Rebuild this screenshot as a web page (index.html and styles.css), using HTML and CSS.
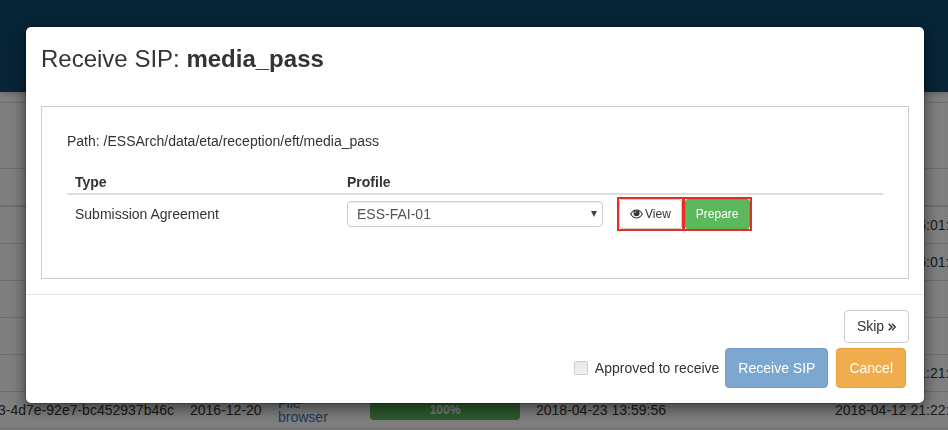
FILE: index.html
```html
<!DOCTYPE html>
<html lang="en">
<head>
<meta charset="utf-8">
<title>Receive SIP</title>
<link rel="stylesheet" href="styles.css">
</head>
<body>
<div class="page">
  <header class="navbar"></header>
  <table class="listing">
    <colgroup><col class="col-id"><col class="col-date"><col class="col-files"><col class="col-progress"><col class="col-start"><col></colgroup>
    <thead>
      <tr class="filters"><th colspan="6"></th></tr>
      <tr class="titles"><th></th><th></th><th></th><th></th><th></th><th></th></tr>
    </thead>
    <tbody>
      <tr><td></td><td></td><td></td><td></td><td></td><td>2018-04-12 16:01:15</td></tr>
      <tr><td></td><td></td><td></td><td></td><td></td><td>2018-04-12 16:01:15</td></tr>
      <tr><td></td><td></td><td></td><td></td><td></td><td></td></tr>
      <tr><td></td><td></td><td></td><td></td><td></td><td></td></tr>
      <tr><td></td><td></td><td></td><td></td><td></td><td>2018-04-12 21:21:42</td></tr>
      <tr><td><div class="uuid">3-4d7e-92e7-bc452937b46c</div></td><td>2016-12-20</td><td class="files"><a href="#files">File browser</a></td><td><div class="progress">100%</div></td><td>2018-04-23 13:59:56</td><td>2018-04-12 21:22:42</td></tr>
    </tbody>
  </table>
</div>
<div class="backdrop">
  <section class="modal" role="dialog" aria-labelledby="modal-title">
    <div class="modal-header">
      <h1 id="modal-title">Receive SIP: <strong>media_pass</strong></h1>
    </div>
    <div class="modal-body">
      <div class="details">
        <p class="path">Path: /ESSArch/data/eta/reception/eft/media_pass</p>
        <table class="profiles">
          <thead><tr><th>Type</th><th>Profile</th><th></th></tr></thead>
          <tbody>
            <tr>
              <td><label for="profile">Submission Agreement</label></td>
              <td><div class="select"><select id="profile"><option>ESS-FAI-01</option></select></div></td>
              <td>
                <div class="actions">
                  <span class="marked"><button type="button" class="btn btn-small btn-default"><svg class="eye" viewBox="0 0 14 12" aria-hidden="true"><path d="M.7 6Q3.3 1.700 7 1.700T13.3 6Q10.700 10.300 7 10.300T.7 6Z" fill="none" stroke="currentColor" stroke-width="1.200"/><circle cx="7" cy="5.200" r="3.200" fill="currentColor"/><path d="M5.200 5.200Q5.200 3.500 6.900 3.500" fill="none" stroke="#fff" stroke-width=".7"/></svg>View</button></span>
                  <span class="marked"><button type="button" class="btn btn-small btn-success">Prepare</button></span>
                </div>
              </td>
            </tr>
          </tbody>
        </table>
      </div>
    </div>
    <div class="modal-footer">
      <button type="button" class="btn btn-default">Skip <svg class="skip" viewBox="0 0 8 8" aria-hidden="true"><path d="M.7.7 4 4 .7 7.300M4 .7 7.300 4 4 7.300" fill="none" stroke="currentColor" stroke-width="1.400"/></svg></button>
      <div class="confirm">
        <label class="approve"><input type="checkbox">Approved to receive</label>
        <button type="button" class="btn btn-large btn-primary">Receive SIP</button>
        <button type="button" class="btn btn-large btn-warning">Cancel</button>
      </div>
    </div>
  </section>
</div>
</body>
</html>
```
FILE: styles.css
```css
* { box-sizing: border-box; }
body {
  margin: 0;
  overflow: hidden;
  background: #fff;
  color: #333;
  font: 14px/20px "Liberation Sans", Arial, sans-serif;
}
button, select, input { font: inherit; }

.page { height: 100vh; overflow: hidden; }
.navbar {
  height: 92px;
  margin-bottom: 10px;
  background: #104a70;
  box-shadow: 0 2px 6px rgba(0, 0, 0, .2);
}
.listing {
  width: 100%;
  min-width: 948px;
  table-layout: fixed;
  border-collapse: separate;
  border-spacing: 0;
  white-space: nowrap;
}
.col-id { width: 182px; }
.col-date { width: 88px; }
.col-files { width: 92px; }
.col-progress { width: 166px; }
.col-start { width: 299px; }
.listing th, .listing td {
  height: 37px;
  padding: 0 8px;
  border-top: 1px solid #ddd;
}
.listing .filters th { height: 66px; }
.listing .titles th { height: 38px; border-bottom: 1px solid #ddd; }
.listing tbody tr:last-child td { border-bottom: 1px solid #ddd; height: 38px; }
.uuid { display: flex; justify-content: flex-end; }
.listing .files { line-height: 14px; white-space: normal; }
.listing a { color: #337ab7; text-decoration: none; }
.progress {
  height: 20px;
  border-radius: 4px;
  background: #5cb85c;
  color: #fff;
  font-size: 12px;
  font-weight: bold;
  text-align: center;
}

.backdrop {
  position: fixed;
  inset: 0;
  padding: 26px 23px 0 25px;
  background: rgba(0, 0, 0, .5);
}
.modal {
  border: 1px solid rgba(0, 0, 0, .2);
  border-radius: 6px;
  background: #fff;
  background-clip: padding-box;
  box-shadow: 0 5px 15px rgba(0, 0, 0, .5);
}
.modal-header { padding: 15px 15px 0; }
h1 { margin: 0; font-size: 24px; line-height: 34px; font-weight: normal; }
.modal-body { padding: 30px 15px 15px; }
.details { min-height: 173px; padding: 24px 25px; border: 1px solid #ccc; }
.path { margin: 0 0 21px; }
.profiles { width: 100%; table-layout: fixed; border-collapse: separate; border-spacing: 0; }
.profiles th { padding: 0 8px 1px; border-bottom: 2px solid #ddd; text-align: left; }
.profiles td { height: 38px; padding: 0 8px; vertical-align: middle; }

.select { position: relative; }
.select::after {
  content: "";
  position: absolute;
  top: 10px;
  right: 6px;
  border: 3px solid transparent;
  border-top: 6px solid #444;
  border-bottom: 0;
  pointer-events: none;
}
select {
  display: block;
  width: 100%;
  height: 26px;
  padding: 0 9px;
  border: 1px solid #ccc;
  border-radius: 4px;
  background: #fff;
  box-shadow: inset 0 1px 1px rgba(0, 0, 0, .08);
  color: #555;
  appearance: none;
}
.actions { display: flex; gap: 3px; }
.marked { display: flex; outline: 2px solid #e52e24; }
.btn {
  padding: 5px 12px;
  border: 1px solid transparent;
  border-radius: 4px;
  line-height: 21px;
  white-space: nowrap;
}
.btn-default { border-color: #ccc; background: #fff; color: #333; }
.btn-success { border-color: #4cae4c; background: #5cb85c; color: #fff; }
.btn-primary { border-color: #6f9cc8; background: #7ba7d0; color: #fff; }
.btn-warning { border-color: #eea236; background: #f0ad4e; color: #fff; }
.btn-small {
  height: 30px;
  padding: 0 10px;
  border-radius: 3px;
  font-size: 12px;
  line-height: 18px;
}
.btn-large { height: 40px; padding: 0 12px; }
.eye { width: 13px; height: 12px; margin-right: 2px; vertical-align: -2px; }
.skip { width: 8px; height: 8px; vertical-align: 0; }

.modal-footer {
  display: flex;
  flex-direction: column;
  align-items: flex-end;
  gap: 5px;
  padding: 15px;
  border-top: 1px solid #e5e5e5;
}
.confirm { display: flex; align-items: center; gap: 8px; margin-right: 3px; }
.approve { display: flex; align-items: center; gap: 7px; margin-right: -2px; }
.approve input {
  width: 14px;
  height: 14px;
  margin: 0;
  border: 1px solid #ccc;
  border-radius: 2px;
  background: linear-gradient(#e8e8e8, #f2f2f2);
  appearance: none;
}
```
